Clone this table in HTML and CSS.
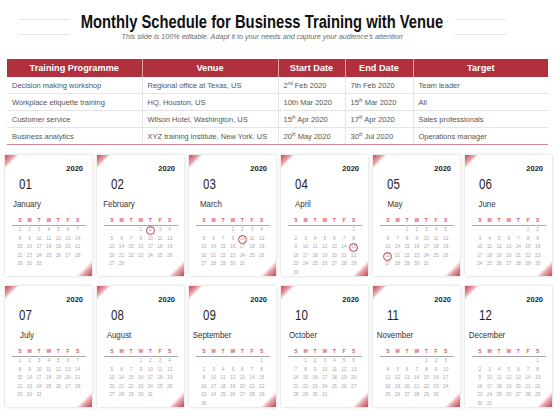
FILE: index.html
```html
<!DOCTYPE html>
<html lang="en">
<head>
<meta charset="utf-8">
<title>Monthly Schedule for Business Training with Venue</title>
<link rel="stylesheet" href="styles.css">
</head>
<body>
<div class="page">
  <header class="head">
    <div class="deco"></div>
    <div class="titles">
      <h1 class="title">Monthly Schedule for Business Training with Venue</h1>
      <p class="sub">This slide is 100% editable. Adapt it to your needs and capture your audience’s attention</p>
    </div>
    <div class="deco"></div>
  </header>

  <table class="sched">
    <colgroup><col class="w1"><col class="w2"><col class="w3"><col class="w4"><col class="w5"></colgroup>
    <thead>
      <tr><th>Training Programme</th><th>Venue</th><th>Start Date</th><th>End Date</th><th>Target</th></tr>
    </thead>
    <tbody>
      <tr><td>Decision making workshop</td><td>Regional office at Texas, US</td><td>2<sup>nd</sup> Feb 2020</td><td>7th Feb 2020</td><td>Team leader</td></tr>
      <tr><td>Workplace etiquette training</td><td>HQ, Houston, US</td><td>10th Mar 2020</td><td>15<sup>th</sup> Mar 2020</td><td>All</td></tr>
      <tr><td>Customer service</td><td>Wilson Hotel, Washington, US</td><td>15<sup>th</sup> Apr 2020</td><td>17<sup>th</sup> Apr 2020</td><td>Sales professionals</td></tr>
      <tr><td>Business analytics</td><td>XYZ training institute, New York. US</td><td>20<sup>th</sup> May 2020</td><td>30<sup>th</sup> Jul 2020</td><td>Operations manager</td></tr>
    </tbody>
  </table>

  <div class="cards">
    <div class="card">
      <div class="yr">2020</div><div class="num">01</div><div class="mon">January</div>
      <div class="wk"><i>S</i><i>M</i><i>T</i><i>W</i><i>T</i><i>F</i><i>S</i></div>
      <div class="days"><i>1</i><i>2</i><i>3</i><i>4</i><i>5</i><i>6</i><i>7</i><i>8</i><i>9</i><i>10</i><i>11</i><i>12</i><i>13</i><i>14</i><i>15</i><i>16</i><i>17</i><i>18</i><i>19</i><i>20</i><i>21</i><i>22</i><i>23</i><i>24</i><i>25</i><i>26</i><i>27</i><i>28</i><i>29</i><i>30</i><i>31</i></div>
    </div>
    <div class="card">
      <div class="yr">2020</div><div class="num">02</div><div class="mon">February</div>
      <div class="wk"><i>S</i><i>M</i><i>T</i><i>W</i><i>T</i><i>F</i><i>S</i></div>
      <div class="days"><i class="f4">1</i><i class="ring">2</i><i>3</i><i>4</i><i>5</i><i>6</i><i>7</i><i>9</i><i>10</i><i>11</i><i>12</i><i>13</i><i>14</i><i>15</i><i>16</i><i>17</i><i>18</i><i>19</i><i>20</i><i>21</i><i>22</i><i>23</i><i>24</i><i>25</i><i>26</i><i>27</i><i>28</i></div>
    </div>
    <div class="card">
      <div class="yr">2020</div><div class="num">03</div><div class="mon">March</div>
      <div class="wk"><i>S</i><i>M</i><i>T</i><i>W</i><i>T</i><i>F</i><i>S</i></div>
      <div class="days"><i class="f4">1</i><i>2</i><i>3</i><i>4</i><i>5</i><i>6</i><i>7</i><i>9</i><i class="ring">10</i><i>11</i><i>12</i><i>13</i><i>14</i><i>15</i><i>16</i><i>17</i><i>18</i><i>19</i><i>20</i><i>21</i><i>22</i><i>23</i><i>24</i><i>25</i><i>26</i><i>27</i><i>28</i><i>29</i><i>30</i><i>31</i></div>
    </div>
    <div class="card">
      <div class="yr">2020</div><div class="num">04</div><div class="mon">April</div>
      <div class="wk"><i>S</i><i>M</i><i>T</i><i>W</i><i>T</i><i>F</i><i>S</i></div>
      <div class="days"><i class="f7">1</i><i>2</i><i>3</i><i>4</i><i>5</i><i>6</i><i>7</i><i>8</i><i>9</i><i>10</i><i>11</i><i>12</i><i>13</i><i>14</i><i class="ring">15</i><i>16</i><i>17</i><i>18</i><i>19</i><i>20</i><i>21</i><i>22</i><i>23</i><i>24</i><i>25</i><i>26</i><i>27</i><i>28</i><i>29</i><i>30</i></div>
    </div>
    <div class="card">
      <div class="yr">2020</div><div class="num">05</div><div class="mon">May</div>
      <div class="wk"><i>S</i><i>M</i><i>T</i><i>W</i><i>T</i><i>F</i><i>S</i></div>
      <div class="days"><i class="f3">1</i><i>2</i><i>3</i><i>4</i><i>5</i><i>6</i><i>7</i><i>8</i><i>9</i><i>10</i><i>11</i><i>12</i><i>13</i><i>14</i><i>15</i><i>16</i><i>17</i><i>18</i><i>19</i><i class="ring">20</i><i>21</i><i>22</i><i>23</i><i>24</i><i>25</i><i>26</i><i>27</i><i>28</i><i>29</i><i>30</i><i>31</i></div>
    </div>
    <div class="card">
      <div class="yr">2020</div><div class="num">06</div><div class="mon">June</div>
      <div class="wk"><i>S</i><i>M</i><i>T</i><i>W</i><i>T</i><i>F</i><i>S</i></div>
      <div class="days"><i class="f6">1</i><i>2</i><i>3</i><i>4</i><i>5</i><i>6</i><i>7</i><i>8</i><i>9</i><i>10</i><i>11</i><i>12</i><i>13</i><i>14</i><i>15</i><i>16</i><i>17</i><i>18</i><i>19</i><i>20</i><i>21</i><i>22</i><i>23</i><i>24</i><i>25</i><i>26</i><i>27</i><i>28</i><i>29</i><i>30</i></div>
    </div>

    <div class="card">
      <div class="yr">2020</div><div class="num">07</div><div class="mon">July</div>
      <div class="wk"><i>S</i><i>M</i><i>T</i><i>W</i><i>T</i><i>F</i><i>S</i></div>
      <div class="days"><i>1</i><i>2</i><i>3</i><i>4</i><i>5</i><i>6</i><i>7</i><i>8</i><i>9</i><i>10</i><i>11</i><i>12</i><i>13</i><i>14</i><i>15</i><i>16</i><i>17</i><i>18</i><i>19</i><i>20</i><i>21</i><i>22</i><i>23</i><i>24</i><i>25</i><i>26</i><i>27</i><i>28</i><i>29</i><i>30</i><i>31</i></div>
    </div>
    <div class="card">
      <div class="yr">2020</div><div class="num">08</div><div class="mon">August</div>
      <div class="wk"><i>S</i><i>M</i><i>T</i><i>W</i><i>T</i><i>F</i><i>S</i></div>
      <div class="days"><i class="f4">1</i><i>2</i><i>3</i><i>4</i><i>5</i><i>6</i><i>7</i><i>9</i><i>10</i><i>11</i><i>12</i><i>13</i><i>14</i><i>15</i><i>16</i><i>17</i><i>18</i><i>19</i><i>20</i><i>21</i><i>22</i><i>23</i><i>24</i><i>25</i><i>26</i><i>27</i><i>28</i><i>29</i><i>30</i><i>31</i></div>
    </div>
    <div class="card">
      <div class="yr">2020</div><div class="num">09</div><div class="mon">September</div>
      <div class="wk"><i>S</i><i>M</i><i>T</i><i>W</i><i>T</i><i>F</i><i>S</i></div>
      <div class="days"><i class="f7">1</i><i>2</i><i>3</i><i>4</i><i>5</i><i>6</i><i>7</i><i>8</i><i>9</i><i>10</i><i>11</i><i>12</i><i>13</i><i>14</i><i>15</i><i>16</i><i>17</i><i>18</i><i>19</i><i>20</i><i>21</i><i>22</i><i>23</i><i>24</i><i>25</i><i>26</i><i>27</i><i>28</i><i>29</i><i>30</i></div>
    </div>
    <div class="card">
      <div class="yr">2020</div><div class="num">10</div><div class="mon">October</div>
      <div class="wk"><i>S</i><i>M</i><i>T</i><i>W</i><i>T</i><i>F</i><i>S</i></div>
      <div class="days"><i class="f2">1</i><i>2</i><i>3</i><i>4</i><i>5</i><i>6</i><i>7</i><i>8</i><i>9</i><i>10</i><i>11</i><i>12</i><i>13</i><i>14</i><i>15</i><i>16</i><i>17</i><i>18</i><i>19</i><i>20</i><i>21</i><i>22</i><i>23</i><i>24</i><i>25</i><i>26</i><i>27</i><i>28</i><i>29</i><i>30</i><i>31</i></div>
    </div>
    <div class="card">
      <div class="yr">2020</div><div class="num">11</div><div class="mon">November</div>
      <div class="wk"><i>S</i><i>M</i><i>T</i><i>W</i><i>T</i><i>F</i><i>S</i></div>
      <div class="days"><i class="f5">1</i><i>2</i><i>3</i><i>4</i><i>5</i><i>6</i><i>7</i><i>8</i><i>9</i><i>10</i><i>11</i><i>12</i><i>13</i><i>14</i><i>15</i><i>16</i><i>17</i><i>18</i><i>19</i><i>20</i><i>21</i><i>22</i><i>23</i><i>24</i><i>25</i><i>26</i><i>27</i><i>28</i><i>29</i><i>30</i></div>
    </div>
    <div class="card">
      <div class="yr">2020</div><div class="num">12</div><div class="mon">December</div>
      <div class="wk"><i>S</i><i>M</i><i>T</i><i>W</i><i>T</i><i>F</i><i>S</i></div>
      <div class="days"><i class="f7">1</i><i>2</i><i>3</i><i>4</i><i>5</i><i>6</i><i>7</i><i>8</i><i>9</i><i>10</i><i>11</i><i>12</i><i>13</i><i>14</i><i>15</i><i>16</i><i>17</i><i>18</i><i>19</i><i>20</i><i>21</i><i>22</i><i>23</i><i>24</i><i>25</i><i>26</i><i>27</i><i>28</i><i>29</i><i>30</i><i>31</i></div>
    </div>
  </div>
</div>
</body>
</html>
```
FILE: styles.css
```css
html, body {
  margin: 0;
  padding: 0;
  background: #ffffff;
}
body {
  font-family: "Liberation Sans", Arial, sans-serif;
  color: #333;
}
.page {
  width: 560px;
  height: 420px;
  overflow: hidden;
}

/* ---------- header ---------- */
.head {
  display: flex;
  justify-content: center;
  align-items: center;
  gap: 11px;
  padding: 12px 36px 0 0;
}
.deco {
  width: 51px;
  height: 14px;
  border-top: 1px solid #e4e4e4;
  border-bottom: 1px solid #e4e4e4;
}
.titles {
  width: 363px;
  display: flex;
  flex-direction: column;
  align-items: center;
}
.title {
  margin: 0;
  font-weight: bold;
  font-size: 18px;
  line-height: 20px;
  color: #111;
  white-space: nowrap;
  transform: scaleX(0.82);
}
.sub {
  margin: 0;
  font-style: italic;
  font-size: 8px;
  line-height: 10px;
  color: #6a6a6a;
  white-space: nowrap;
  transform: scaleX(0.9);
}

/* ---------- table ---------- */
.sched {
  margin: 17px 0 0 7px;
  width: 541px;
  border-collapse: collapse;
  table-layout: fixed;
}
.w1 { width: 135px; }
.w2 { width: 136px; }
.w3 { width: 67px; }
.w4 { width: 68px; }
.w5 { width: 135px; }
.sched th {
  height: 18px;
  padding: 0;
  background: #b1303e;
  color: #fff;
  font-size: 9.2px;
  font-weight: bold;
  text-align: center;
  border-left: 1px solid #d9a0a6;
}
.sched th:first-child { border-left: none; }
.sched td {
  height: 16px;
  padding: 0 4px 0 5px;
  font-size: 7.5px;
  color: #555;
  white-space: nowrap;
  border-bottom: 1px solid #e4e4e4;
  border-left: 1px solid #e4e4e4;
}
.sched td:first-child { border-left: none; }
.sched tbody tr:last-child td { border-bottom: 1px solid #cf858d; }
.sched sup {
  font-size: 4.5px;
  line-height: 0;
  vertical-align: 3px;
}

/* ---------- calendar cards ---------- */
.cards {
  display: grid;
  grid-template-columns: repeat(6, 87px);
  grid-auto-rows: 121px;
  column-gap: 5px;
  row-gap: 10px;
  margin-top: 10px;
  padding-left: 5px;
}
.card {
  position: relative;
  box-sizing: border-box;
  padding-top: 9px;
  background: #fff;
  box-shadow: 0 0 3px rgba(0, 0, 0, 0.2);
}
.card::before {
  content: "";
  position: absolute;
  left: 0;
  top: 0;
  width: 14px;
  height: 14px;
  background: linear-gradient(135deg, #c24a59 0%, #e8a2aa 35%, rgba(255, 255, 255, 0) 50%);
}
.card::after {
  content: "";
  position: absolute;
  right: 0;
  bottom: 0;
  width: 16px;
  height: 16px;
  background: linear-gradient(315deg, #bf4352 0%, #e7a1a9 32%, rgba(255, 255, 255, 0) 50%);
}
.yr {
  text-align: right;
  padding-right: 9px;
  font-size: 7.5px;
  line-height: 10px;
  font-weight: bold;
  color: #222;
}
.num {
  margin-top: 2.5px;
  padding-left: 14px;
  font-size: 14px;
  line-height: 14px;
  color: #1e1e1e;
  transform: scaleX(0.82);
  transform-origin: 14px 50%;
}
.mon {
  margin-top: 7px;
  width: 44px;
  text-align: center;
  font-size: 9.5px;
  line-height: 12px;
  color: #333;
  white-space: nowrap;
  transform: scaleX(0.83);
}
.wk, .days {
  display: grid;
  grid-template-columns: repeat(7, 1fr);
  margin: 0 6px 0 7px;
  text-align: center;
}
.wk {
  margin-top: 7px;
  padding: 0 3.5px 2px 3px;
  border-bottom: 1px solid #a8a8a8;
  font-size: 5px;
  line-height: 6px;
  font-weight: bold;
  color: #d25a6a;
}
.days {
  padding: 0.75px 3.5px 0 3px;
  grid-auto-rows: 8.5px;
  font-size: 4.8px;
  line-height: 8.5px;
  color: #a8a8a8;
}
.wk i, .days i {
  font-style: normal;
  position: relative;
}
.f2 { grid-column-start: 2; }
.f3 { grid-column-start: 3; }
.f4 { grid-column-start: 4; }
.f5 { grid-column-start: 5; }
.f6 { grid-column-start: 6; }
.f7 { grid-column-start: 7; }
.ring::after {
  content: "";
  position: absolute;
  left: 50%;
  top: 50%;
  width: 7px;
  height: 7px;
  margin: -4.5px 0 0 -4.5px;
  border: 1px solid #c0404e;
  border-radius: 50%;
}
```
